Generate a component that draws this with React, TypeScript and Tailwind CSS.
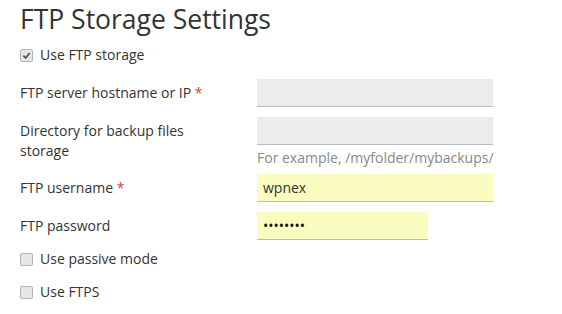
import React from 'react';

function Check({ checked }: { checked?: boolean }) {
  return (
    <span className="flex h-[13px] w-[13px] shrink-0 items-center justify-center rounded-[2px] border border-[#b4b4b4] bg-[#e6e6e6]">
      {checked && (
        <svg viewBox="0 0 10 10" className="h-[9px] w-[9px]">
          <path d="M1.5 5.2 L4 7.6 L8.6 2.2" fill="none" stroke="#555" strokeWidth="2" />
        </svg>
      )}
    </span>
  );
}

function Field({
  label,
  required,
  value,
  filled,
  width = 'w-[236px]',
  hint,
  password,
}: {
  label: React.ReactNode;
  required?: boolean;
  value?: string;
  filled?: boolean;
  width?: string;
  hint?: string;
  password?: boolean;
}) {
  return (
    <div className="flex">
      <div className="w-[237px] shrink-0 pr-[16px] pt-[4px] leading-[20px]">
        {label}
        {required && <span className="text-[#dd3d36]"> *</span>}
      </div>
      <div>
        <div
          className={`${width} h-[28px] border-b border-[#b4bec8] px-[6px] leading-[27px] ${
            filled ? 'bg-[#fafcc0]' : 'bg-[#ececec]'
          } ${password ? 'text-[#111]' : ''}`}
        >
          {password ? '••••••••' : value}
        </div>
        {hint && <div className="mt-[3px] leading-[20px] text-[#888]">{hint}</div>}
      </div>
    </div>
  );
}

export default function App() {
  return (
    <div className="h-[314px] w-[562px] overflow-hidden bg-white pl-[20px] text-[14px] text-[#333] [font-family:'Open_Sans',sans-serif]">
      <h1 className="pt-[2px] text-[26.5px] leading-[34px] text-[#333]">FTP Storage Settings</h1>

      <label className="mt-[9px] flex items-center gap-[7px] leading-[20px]">
        <Check checked />
        Use FTP storage
      </label>

      <div className="mt-[14px] flex flex-col gap-[10px]">
        <Field label="FTP server hostname or IP" required />
        <Field
          label={<span className="block w-[190px]">Directory for backup files storage</span>}
          hint="For example, /myfolder/mybackups/"
        />
        <div className="-mt-[4px]">
          <Field label="FTP username" required value="wpnex" filled />
        </div>
        <Field label="FTP password" filled password width="w-[171px]" />
      </div>

      <label className="mt-[9px] flex items-center gap-[7px] leading-[20px]">
        <Check />
        Use passive mode
      </label>
      <label className="mt-[13px] flex items-center gap-[7px] leading-[20px]">
        <Check />
        Use FTPS
      </label>
    </div>
  );
}
